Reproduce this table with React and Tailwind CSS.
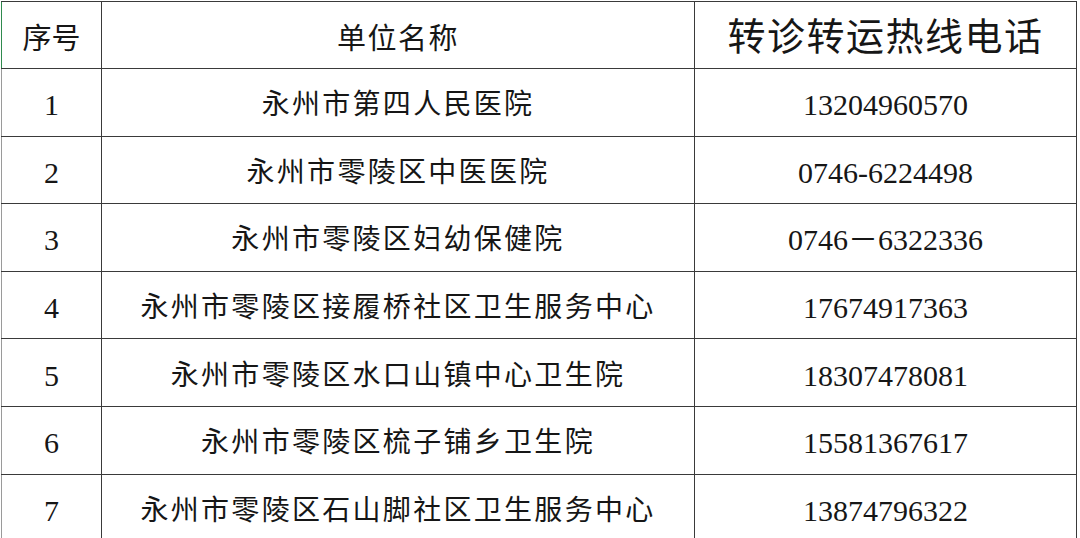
import React from 'react';

const rows = [
  ['1', '永州市第四人民医院', '13204960570'],
  ['2', '永州市零陵区中医医院', '0746-6224498'],
  ['3', '永州市零陵区妇幼保健院', '0746－6322336'],
  ['4', '永州市零陵区接履桥社区卫生服务中心', '17674917363'],
  ['5', '永州市零陵区水口山镇中心卫生院', '18307478081'],
  ['6', '永州市零陵区梳子铺乡卫生院', '15581367617'],
  ['7', '永州市零陵区石山脚社区卫生服务中心', '13874796322'],
];

const font = { fontFamily: '"Liberation Serif", "Noto Sans CJK SC", serif' };

export default function App() {
  return (
    <div className="w-[1080px] h-[538px] bg-white overflow-hidden pt-px pl-px" style={font}>
      <table className="border-collapse table-fixed w-[1075px] text-[#161616]">
        <colgroup>
          <col className="w-[100px]" />
          <col className="w-[593px]" />
          <col className="w-[382px]" />
        </colgroup>
        <thead>
          <tr className="h-[67px]">
            <th className="border-[1.5px] border-[#3a3a3a] border-l-[#2f8a4e] font-normal text-[29px] text-center align-middle pt-[9px] p-0">序号</th>
            <th className="border-[1.5px] border-[#3a3a3a] font-normal text-[29px] tracking-[1.5px] text-center align-middle pt-[9px] p-0">单位名称</th>
            <th className="border-[1.5px] border-[#3a3a3a] font-normal text-[38px] tracking-[1.5px] text-center align-middle pt-[5px] p-0">转诊转运热线电话</th>
          </tr>
        </thead>
        <tbody>
          {rows.map(([n, name, tel]) => (
            <tr key={n} className="h-[67.6px]">
              <td className="border-[1.5px] border-[#3a3a3a] border-l-[#9a9a9a] text-[30px] text-center align-middle pt-[5px]">{n}</td>
              <td className="border-[1.5px] border-[#3a3a3a] text-[28px] tracking-[2.3px] text-center align-middle pt-[6px]">{name}</td>
              <td className="border-[1.5px] border-[#3a3a3a] text-[30px] text-center align-middle pt-[5px]">{tel}</td>
            </tr>
          ))}
        </tbody>
      </table>
    </div>
  );
}
